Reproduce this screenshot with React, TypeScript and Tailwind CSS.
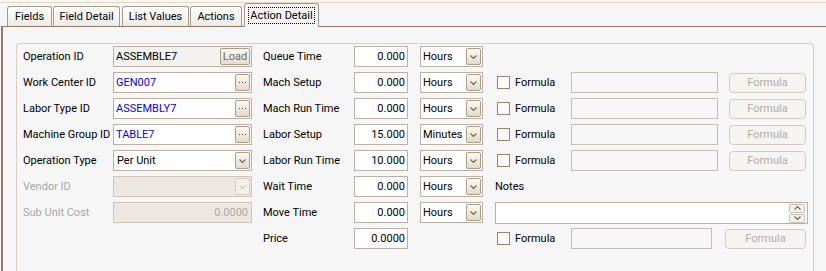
import React from "react";

const FONT = { fontFamily: "Roboto, 'Liberation Sans', Arial, sans-serif" };

function Chevron({ up = false, disabled = false }: { up?: boolean; disabled?: boolean }) {
  return (
    <svg width="7" height="4" viewBox="0 0 7 4" className="block">
      <polyline
        points={up ? "0.5,3.5 3.5,0.5 6.5,3.5" : "0.5,0.5 3.5,3.5 6.5,0.5"}
        fill="none"
        stroke={disabled ? "#cfc7bb" : "#6f6557"}
        strokeWidth="1.1"
      />
    </svg>
  );
}

function DropBtn({ disabled = false }: { disabled?: boolean }) {
  return (
    <div
      className={
        disabled
          ? "absolute right-[1px] top-[1px] w-[15px] h-[17px] border border-[#d6cec2] rounded-[2px] bg-[#f3f0ea] flex items-center justify-center"
          : "absolute right-[1px] top-[1px] w-[15px] h-[17px] border border-[#ad9d86] rounded-[2px] bg-linear-to-b from-[#fcfaf5] to-[#e4dac8] flex items-center justify-center"
      }
    >
      <Chevron disabled={disabled} />
    </div>
  );
}

function EllBtn() {
  return (
    <div className="absolute right-[1px] top-[1px] w-[15px] h-[17px] border border-[#ad9d86] rounded-[2px] bg-linear-to-b from-[#fcfaf5] to-[#e4dac8] flex items-center justify-center">
      <svg width="7" height="2" viewBox="0 0 7 2" className="block">
        <rect x="0" y="0" width="1" height="1" fill="#4a4238" />
        <rect x="3" y="0" width="1" height="1" fill="#4a4238" />
        <rect x="6" y="0" width="1" height="1" fill="#4a4238" />
      </svg>
    </div>
  );
}

function LookupField({ value }: { value: string }) {
  return (
    <div className="relative shrink-0 w-[139px] h-[21px] border border-[#bcb0a3] bg-white flex items-center pl-[2px] text-[#0000ff]">
      {value}
      <EllBtn />
    </div>
  );
}

function NumBox({ value }: { value: string }) {
  return (
    <div className="shrink-0 w-[54px] h-[21px] border border-[#bcb0a3] bg-white flex items-center justify-end pr-[2px]">
      {value}
    </div>
  );
}

function Unit({ value }: { value: string }) {
  return (
    <div className="relative shrink-0 w-[63px] h-[21px] border border-[#bcb0a3] bg-white flex items-center pl-[2px]">
      {value}
      <DropBtn />
    </div>
  );
}

function FormulaGroup({ narrow = false }: { narrow?: boolean }) {
  return (
    <div className="flex items-center">
      <div className="shrink-0 w-[13px] h-[13px] ml-[2px] border border-[#9c8468] bg-[#fbfbfa]" />
      <div className="shrink-0 ml-[5px] w-[56px]">Formula</div>
      <div
        className={
          narrow
            ? "shrink-0 w-[141px] h-[21px] border border-[#c7bdb1]"
            : "shrink-0 w-[147px] h-[21px] border border-[#c7bdb1]"
        }
      />
      <div
        className={
          narrow
            ? "shrink-0 ml-[13px] w-[81px] h-[20px] border border-[#d3cbc0] rounded-[4px] bg-[#f6f4f0] flex items-center justify-center text-[#b3aca3]"
            : "shrink-0 ml-[11px] w-[77px] h-[20px] border border-[#d3cbc0] rounded-[4px] bg-[#f6f4f0] flex items-center justify-center text-[#b3aca3]"
        }
      >
        Formula
      </div>
    </div>
  );
}

function Row({
  label,
  labelDisabled = false,
  field,
  mid,
  num,
  unit,
  right,
}: {
  label: string;
  labelDisabled?: boolean;
  field: React.ReactNode;
  mid: string;
  num: string;
  unit?: string;
  right?: React.ReactNode;
}) {
  return (
    <div className="flex items-center h-[21px] whitespace-nowrap">
      <div className={labelDisabled ? "shrink-0 w-[90px] text-[#a7a7a7]" : "shrink-0 w-[90px]"}>{label}</div>
      {field}
      <div className="shrink-0 w-[11px]" />
      <div className="shrink-0 w-[91px]">{mid}</div>
      <NumBox value={num} />
      <div className="shrink-0 w-[12px]" />
      {unit ? <Unit value={unit} /> : <div className="shrink-0 w-[63px]" />}
      <div className="shrink-0 w-[12px]" />
      <div className="flex-1">{right}</div>
    </div>
  );
}

export default function App() {
  const tabBase =
    "shrink-0 h-[20px] border border-b-0 border-[#a39a8c] rounded-t-[3px] bg-linear-to-b from-white to-[#ecebe5] flex items-center justify-center";
  return (
    <div className="w-[826px] h-[271px] overflow-hidden bg-[#f6f6f6] text-[11px] text-black leading-none" style={FONT}>
      <div className="h-[2px]" />
      <div className="h-px bg-[#e6d7bb]" />
      {/* tab strip */}
      <div className="h-[23px] flex items-end pl-[7px] whitespace-nowrap">
        <div className={`${tabBase} w-[45px]`}>Fields</div>
        <div className={`${tabBase} w-[67px] ml-[1px]`}>Field Detail</div>
        <div className={`${tabBase} w-[67px] ml-[2px]`}>List Values</div>
        <div className={`${tabBase} w-[52px] ml-[1px]`}>Actions</div>
        <div className="shrink-0 relative z-10 -mb-px ml-[2px] w-[75px] h-[24px] border border-b-0 border-[#a39a8c] rounded-t-[3px] bg-[#f6f6f6] flex items-center justify-center">
          <span className="outline outline-1 outline-dotted outline-black px-[1px] py-[2px]">Action Detail</span>
        </div>
      </div>
      {/* panel */}
      <div className="ml-px border-t border-l-2 border-[#8d7a64] h-[260px] pl-[13px] pt-[16px]">
        <div className="w-[798px] h-[260px] border border-[#d9cdbd] rounded-[3px] pl-[6px] pt-[2px] flex flex-col gap-[5px]">
          <Row
            label="Operation ID"
            field={
              <div className="relative shrink-0 w-[139px] h-[21px] border border-[#bcb0a3] bg-[#f3f2ef] flex items-center pl-[2px]">
                ASSEMBLE7
                <div className="absolute right-[1px] top-[1px] w-[30px] h-[17px] border border-[#ad9d86] rounded-[2px] bg-linear-to-b from-[#fcfaf5] to-[#e6ddcd] flex items-center justify-center text-[#6b6b6b]">
                  Load
                </div>
              </div>
            }
            mid="Queue Time"
            num="0.000"
            unit="Hours"
          />
          <Row label="Work Center ID" field={<LookupField value="GEN007" />} mid="Mach Setup" num="0.000" unit="Hours" right={<FormulaGroup />} />
          <Row label="Labor Type ID" field={<LookupField value="ASSEMBLY7" />} mid="Mach Run Time" num="0.000" unit="Hours" right={<FormulaGroup />} />
          <Row label="Machine Group ID" field={<LookupField value="TABLE7" />} mid="Labor Setup" num="15.000" unit="Minutes" right={<FormulaGroup />} />
          <Row
            label="Operation Type"
            field={
              <div className="relative shrink-0 w-[139px] h-[21px] border border-[#bcb0a3] bg-white flex items-center pl-[3px]">
                Per Unit
                <DropBtn />
              </div>
            }
            mid="Labor Run Time"
            num="10.000"
            unit="Hours"
            right={<FormulaGroup />}
          />
          <Row
            label="Vendor ID"
            labelDisabled
            field={
              <div className="relative shrink-0 w-[139px] h-[21px] border border-[#cdc3b6] bg-[#ece8e0]">
                <DropBtn disabled />
              </div>
            }
            mid="Wait Time"
            num="0.000"
            unit="Hours"
            right={<div>Notes</div>}
          />
          <Row
            label="Sub Unit Cost"
            labelDisabled
            field={
              <div className="shrink-0 w-[139px] h-[21px] border border-[#cdc3b6] bg-[#ece8e0] flex items-center justify-end pr-[3px] text-[#a9a9a9]">
                0.0000
              </div>
            }
            mid="Move Time"
            num="0.000"
            unit="Hours"
            right={
              <div className="relative w-[313px] h-[22px] border border-[#bcb0a3] bg-white">
                <div className="absolute right-[2px] top-[1px] flex flex-col gap-[1px]">
                  <div className="w-[16px] h-[9px] border border-[#c8c0b5] rounded-[2px] bg-[#f4f2ee] flex items-center justify-center">
                    <Chevron up />
                  </div>
                  <div className="w-[16px] h-[9px] border border-[#c8c0b5] rounded-[2px] bg-[#f4f2ee] flex items-center justify-center">
                    <Chevron />
                  </div>
                </div>
              </div>
            }
          />
          <Row label="" field={<div className="shrink-0 w-[139px]" />} mid="Price" num="0.0000" right={<FormulaGroup narrow />} />
        </div>
      </div>
    </div>
  );
}
